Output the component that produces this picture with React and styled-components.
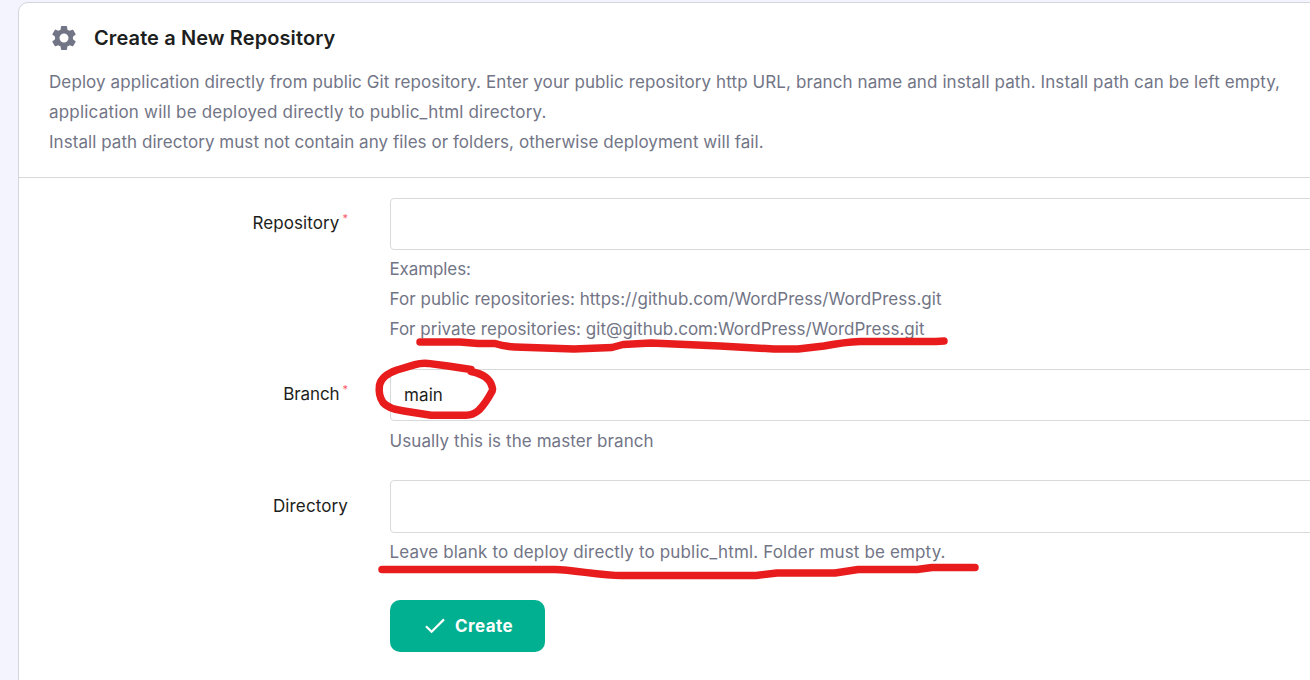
import React from 'react';
import styled, { createGlobalStyle } from 'styled-components';

const GlobalStyle = createGlobalStyle`
  * { box-sizing: border-box; }
  html, body { margin: 0; height: 100%; overflow: hidden; }
  body {
    background: #f4f4ff;
    font-family: Inter, "Liberation Sans", sans-serif;
    font-size: 17px;
    font-weight: 400;
    line-height: 30px;
    color: #1d1e20;
  }
`;

const Page = styled.main`
  position: relative;
  height: 680px;
  padding: 2px 0 0 18px;
  overflow: hidden;
`;

const Card = styled.section`
  width: 1330px;
  height: 720px;
  background: #fff;
  border: 1px solid #d4d5dc;
  border-radius: 10px;
`;

const CardHeader = styled.header`
  height: 175px;
  padding: 20px 30px 0;
  border-bottom: 1px solid #d8d9db;
`;

const TitleRow = styled.div`
  display: flex;
  align-items: center;
  gap: 15px;
  height: 30px;
`;

const GearIcon = styled.svg`
  width: 30px;
  height: 30px;
  fill: #727586;
`;

const Title = styled.h1`
  margin: 0;
  font-size: 20px;
  font-weight: 600;
  letter-spacing: 0.1px;
`;

const Text = styled.div`
  color: #727586;
  white-space: nowrap;
  letter-spacing: ${({ $tracking }) => $tracking || 0}px;
`;

const Intro = styled.div`
  padding-top: 14px;
`;

const Form = styled.form`
  display: flex;
  flex-direction: column;
  gap: 25px;
  padding-top: 20px;
`;

const Field = styled.div`
  display: grid;
  grid-template-columns: 329px 1fr;
  column-gap: 42px;
  align-items: start;
`;

const Label = styled.label`
  display: flex;
  justify-content: flex-end;
  gap: 3px;
  padding-top: ${({ $tall }) => ($tall ? 11 : 10)}px;
  letter-spacing: ${({ $tracking }) => $tracking || 0}px;
`;

const Required = styled.span`
  font-size: 11px;
  line-height: 20px;
  letter-spacing: 0;
  color: #ff5c66;
`;

const Control = styled.div`
  display: flex;
  flex-direction: column;
  gap: 4px;
`;

const Hint = styled.div`
  height: ${({ $lines }) => $lines * 30}px;
  margin-left: -0.5px;
  padding-top: ${({ $shift }) => $shift || 0}px;
`;

const Input = styled.input`
  width: 100%;
  height: ${({ $tall }) => ($tall ? 53 : 52)}px;
  padding: 0 13px;
  border: 1px solid #d8d9db;
  border-radius: 4px;
  background: #fff;
  font: inherit;
  letter-spacing: 0.1px;
  color: #1d1e20;
  outline: none;
`;

const Actions = styled.div`
  padding: 8px 0 0 371px;
`;

const CreateButton = styled.button`
  display: flex;
  align-items: center;
  justify-content: center;
  gap: 10px;
  width: 155px;
  height: 52px;
  padding: 0 0 0 3px;
  border: 0;
  border-radius: 10px;
  background: #00b090;
  color: #fff;
  font: inherit;
  font-weight: 700;
  letter-spacing: 0.45px;
`;

const CheckIcon = styled.svg`
  width: 20px;
  height: 16px;
  fill: none;
  stroke: #fff;
  stroke-width: 2.2;
`;

const Markup = styled.svg`
  position: absolute;
  inset: 0;
  width: 1310px;
  height: 680px;
  pointer-events: none;
  fill: none;
  stroke: #e81c1c;
  stroke-width: 7.5;
  stroke-linecap: round;
  stroke-linejoin: round;
`;

export default function App() {
  return (
    <Page>
      <GlobalStyle />
      <Card>
        <CardHeader>
          <TitleRow>
            <GearIcon viewBox="0 0 24 24">
              <path d="M19.14 12.94c.04-.3.06-.61.06-.94 0-.32-.02-.64-.07-.94l2.03-1.58c.18-.14.23-.41.12-.61l-1.92-3.32c-.12-.22-.37-.29-.59-.22l-2.39.96c-.5-.38-1.03-.7-1.62-.94l-.36-2.54c-.04-.24-.24-.41-.48-.41h-3.84c-.24 0-.43.17-.47.41l-.36 2.54c-.59.24-1.13.57-1.62.94l-2.39-.96c-.22-.08-.47 0-.59.22L2.74 8.87c-.12.21-.08.47.12.61l2.03 1.58c-.05.3-.09.63-.09.94s.02.64.07.94l-2.03 1.58c-.18.14-.23.41-.12.61l1.92 3.32c.12.22.37.29.59.22l2.39-.96c.5.38 1.03.7 1.62.94l.36 2.54c.05.24.24.41.48.41h3.84c.24 0 .44-.17.47-.41l.36-2.54c.59-.24 1.13-.56 1.62-.94l2.39.96c.22.08.47 0 .59-.22l1.92-3.32c.12-.22.07-.47-.12-.61l-2.01-1.58zM12 15.6c-1.98 0-3.6-1.62-3.6-3.6s1.62-3.6 3.6-3.6 3.6 1.62 3.6 3.6-1.62 3.6-3.6 3.6z" />
            </GearIcon>
            <Title>Create a New Repository</Title>
          </TitleRow>
          <Intro>
            <Text $tracking={0.098}>
              Deploy application directly from public Git repository. Enter your public repository http URL, branch name and install path. Install path can be left empty,
            </Text>
            <Text $tracking={0.195}>application will be deployed directly to public_html directory.</Text>
            <Text $tracking={0.05}>
              Install path directory must not contain any files or folders, otherwise deployment will fail.
            </Text>
          </Intro>
        </CardHeader>
        <Form onSubmit={(e) => e.preventDefault()}>
          <Field>
            <Label htmlFor="repository" $tracking={0.1}>
              Repository<Required>*</Required>
            </Label>
            <Control>
              <Input id="repository" />
              <Hint $lines={3}>
                <Text $tracking={-0.1}>Examples:</Text>
                <Text $tracking={0.05}>For public repositories: https://github.com/WordPress/WordPress.git</Text>
                <Text $tracking={0.025}>For private repositories: git@github.com:WordPress/WordPress.git</Text>
              </Hint>
            </Control>
          </Field>
          <Field>
            <Label htmlFor="branch" $tracking={-0.1}>
              Branch<Required>*</Required>
            </Label>
            <Control>
              <Input id="branch" defaultValue="main" />
              <Hint $lines={1} $shift={1}>
                <Text $tracking={0.08}>Usually this is the master branch</Text>
              </Hint>
            </Control>
          </Field>
          <Field>
            <Label htmlFor="directory" $tall $tracking={0.12}>Directory</Label>
            <Control>
              <Input id="directory" $tall />
              <Hint $lines={1}>
                <Text $tracking={0.148}>Leave blank to deploy directly to public_html. Folder must be empty.</Text>
              </Hint>
            </Control>
          </Field>
          <Actions>
            <CreateButton type="submit">
              <CheckIcon viewBox="0 0 20 16">
                <path d="M1 8.2 L6.6 13.8 L19 1.4" />
              </CheckIcon>
              Create
            </CreateButton>
          </Actions>
        </Form>
      </Card>
      <Markup viewBox="0 0 1310 680">
        <path d="M420 342 H460 L478 343.5 L495 343.5 Q504 346.5 515 347 L574 349 L612 347.5 L623 344.5 L651 343 L720 346 L774 349 H798 L824 346 Q845 342 860 341.5 H936 L944 341" />
        <path d="M471 369.5 L448 366 L428 363.4 Q421 362.8 415 364.7 L397 370 C387 373.5 381 378 379.5 385 C378.5 392 380 398 383 402.5 C388 408.500 396 410 404 411 L431 415.3 H466 Q473 415.3 479 410 C485 404 489 397 492.2 391 Q493 389 492 386.5 C490 379 484 374 471 371.5" />
        <path d="M382 569.5 H555 C575 570 600 575.5 622 575.5 H756 L777 573 H835 L858 569.5 H917 L932 567.5 H975" />
      </Markup>
    </Page>
  );
}
